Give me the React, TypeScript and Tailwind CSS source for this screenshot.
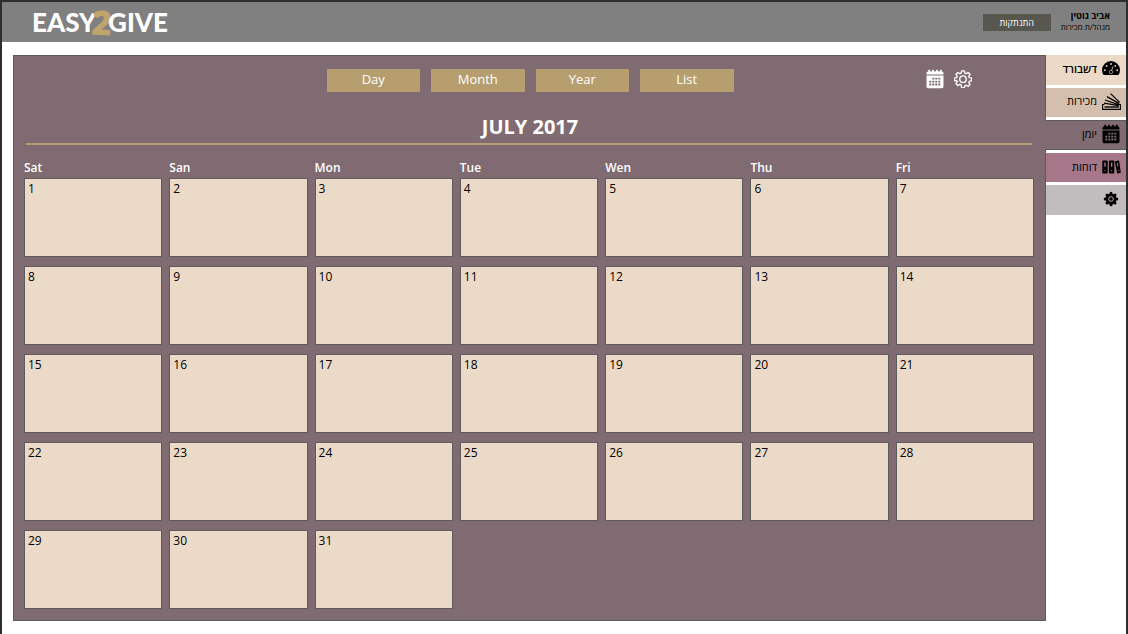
import type { ReactNode } from 'react';

const views = ['Day', 'Month', 'Year', 'List'];
const weekdays = ['Sat', 'San', 'Mon', 'Tue', 'Wen', 'Thu', 'Fri'];
const weeks = [0, 1, 2, 3, 4].map((w) =>
  [1, 2, 3, 4, 5, 6, 7].map((d) => w * 7 + d).filter((d) => d <= 31),
);

function CalendarIcon({ hole }: { hole: string }) {
  return (
    <svg viewBox="0 0 18 20" className="h-5 w-[18px]" aria-hidden="true">
      <path
        fill="currentColor"
        d="M0.5 6.5h17V17.5a1.7 1.7 0 0 1-1.7 1.7H2.2A1.7 1.7 0 0 1 0.5 17.5zM0.5 5.5V4.2Q0.5 2.6 2 2.6L2.4 1.2Q3.2 0 4 1.2L4.6 2.6H5.6L6.2 1.2Q7 0 7.8 1.2L8.4 2.6H9.6L10.2 1.2Q11 0 11.8 1.2L12.4 2.6H13.4L14 1.2Q14.8 0 15.6 1.2L16 2.6Q17.5 2.6 17.5 4.2V5.500z"
      />
      <path
        className={hole}
        strokeWidth="1.8"
        strokeDasharray="2 1"
        fill="none"
        d="M6.300 9.700h8.700M3.300 12.600h11.700M3.300 15.500h11.700"
      />
    </svg>
  );
}

function GearOutline() {
  return (
    <svg viewBox="0 0 20 20" className="h-[18px] w-[18px]" fill="none" stroke="currentColor" strokeWidth="1.5" strokeLinejoin="round" aria-hidden="true">
      <path d="M8.500 1h3l.5 2.400 1.600.7 2.100-1.400 2.100 2.100-1.400 2.100.7 1.600 2.400.5v3l-2.400.5-.7 1.600 1.400 2.100-2.100 2.100-2.100-1.400-1.600.7-.5 2.400h-3L8 16.600l-1.600-.7-2.100 1.400-2.100-2.100 1.400-2.100-.7-1.600L.5 12V9l2.400-.5.7-1.600-1.400-2.100 2.100-2.100L6.400 4.100 8 3.400z" />
      <circle cx="10" cy="10.200" r="3.600" />
    </svg>
  );
}

function DashboardIcon() {
  return (
    <svg viewBox="0 0 18 15" className="h-[15px] w-[18px]" aria-hidden="true">
      <path fill="currentColor" d="M1.600 14A8.700 8.700 0 0 1 0 9a9 9 0 0 1 18 0 8.700 8.700 0 0 1-1.600 5z" />
      <g className="fill-[#ebdac8]">
        <circle cx="2.800" cy="9.200" r=".9" />
        <circle cx="4.700" cy="4.900" r=".9" />
        <circle cx="9" cy="3" r=".9" />
        <circle cx="13.300" cy="4.900" r=".9" />
        <circle cx="15.200" cy="9.200" r=".9" />
      </g>
      <path className="stroke-[#ebdac8]" strokeWidth=".8" d="M9.200 10.500L11 5.500" />
      <circle className="stroke-[#ebdac8]" strokeWidth=".6" cx="9" cy="11" r="1.700" fill="currentColor" />
    </svg>
  );
}

function SalesIcon() {
  return (
    <svg viewBox="0 0 19 17" className="h-[17px] w-[19px]" fill="none" stroke="currentColor" strokeWidth="1.100" aria-hidden="true">
      <path d="M2.500 11.500H.6v4.900h17.800v-4.900H17" />
      <path d="M2.500 14h14.500" strokeWidth="1.400" />
      <path d="M2 10.200L16.800 12.700M3 7L17 11.800M5 3.600L17.200 10.600M8.600.6L17.600 9.400" strokeWidth="1.300" />
    </svg>
  );
}

function ReportsIcon() {
  return (
    <svg viewBox="0 0 19 14" className="h-3.5 w-[19px]" aria-hidden="true">
      <rect x=".3" y=".6" width="5.400" height="12.800" rx=".9" fill="currentColor" />
      <rect x="6.900" y=".6" width="5.400" height="12.800" rx=".9" fill="currentColor" />
      <path fill="currentColor" d="M13.300 1.300l2.900-.8q.7-.1.9.6l1.700 11q0 .7-.6.8l-2.200.5q-.7.1-.9-.7l-2.200-10.600q0-.6.4-.8z" />
      <g className="fill-[#a67789]">
        <path d="M2.300 2.600h1.400v4.200H2.300zM8.900 2.600h1.400v4.200H8.900zM14.800 2.900l1-.2.700 3.800-1 .2z" />
        <circle cx="3" cy="10.600" r=".7" />
        <circle cx="9.600" cy="10.600" r=".7" />
        <circle cx="16.800" cy="10.600" r=".6" />
      </g>
    </svg>
  );
}

function SettingsIcon() {
  return (
    <svg viewBox="0 0 16 16" className="h-4 w-4" aria-hidden="true">
      <circle cx="8" cy="8" r="5.500" fill="currentColor" />
      <g stroke="currentColor" strokeWidth="3" strokeLinecap="round">
        <path d="M8 2.200v11.600M2.200 8h11.600M4 4l8 8M12 4l-8 8" />
      </g>
      <circle cx="8" cy="8" r="2.300" fill="none" className="stroke-[#c1bdbe]" strokeWidth=".9" />
    </svg>
  );
}

type NavItem = { label: string; tone: string; icon: ReactNode; name?: string };

const navItems: NavItem[] = [
  { label: 'דשבורד', tone: 'bg-[#ebdac8] font-semibold', icon: <DashboardIcon /> },
  { label: 'מכירות', tone: 'bg-[#d4bfaf]', icon: <SalesIcon /> },
  { label: 'יומן', tone: 'bg-[#7f6b71] border-y border-[#5b5b5b] -ml-px', icon: <CalendarIcon hole="stroke-[#7f6b71]" /> },
  { label: 'דוחות', tone: 'bg-[#a67789]', icon: <ReportsIcon /> },
  { label: '', tone: 'bg-[#c1bdbe]', icon: <SettingsIcon />, name: 'הגדרות' },
];

export default function App() {
  return (
    <div className="min-h-screen border-x-2 border-t-2 border-[#2e2e2e] bg-white font-['Open_Sans','Noto_Sans',sans-serif] text-black">
      <header className="flex h-10 items-center justify-between bg-[#808080] pr-4 pl-[30px]">
        <a href="#" aria-label="EASY2GIVE" className="flex items-center font-['Lato',sans-serif] text-[26px] leading-10 font-black text-white">
          <span>EASY</span>
          <span className="-mx-1 rotate-3 font-['Open_Sans',sans-serif] text-[34px] font-extrabold text-[#bfa46c]">2</span>
          <span className="z-10">GIVE</span>
        </a>
        <div className="flex items-center gap-2.5">
          <button type="button" className="h-[17px] w-[68px] bg-[#575750] text-[9px] leading-[15px] font-medium text-white">
            התנתקות
          </button>
          <div dir="rtl" className="pb-0.5 text-[8px] leading-[11px]">
            <p className="text-[9px] font-bold">אביב גוטין</p>
            <p>מנהל/ת מכירות</p>
          </div>
        </div>
      </header>

      <div className="flex items-start pt-[13px] pl-[11px]">
        <main className="flex-1 border border-[#5b5b5b] bg-[#7f6b71] pt-[13px] pr-[11px] pb-[11px] pl-3 text-white">
          <div className="grid grid-cols-[1fr_407px_1fr] items-center">
            <div className="col-start-2 grid grid-cols-4 gap-[11px]">
              {views.map((v) => (
                <button key={v} type="button" className="h-[23px] bg-[#b69e6f] text-[13px] leading-5 font-medium">
                  <span className="block pb-1">{v}</span>
                </button>
              ))}
            </div>
            <div className="flex h-5 items-center justify-end gap-2.5 self-start pr-[62px]">
              <button type="button" aria-label="Calendar">
                <CalendarIcon hole="stroke-[#7f6b71]" />
              </button>
              <button type="button" aria-label="Settings">
                <GearOutline />
              </button>
            </div>
          </div>

          <h1 className="mt-[21px] mr-0.5 border-b-2 border-[#b69e6f] pb-0.5 pl-0.5 text-center text-[20px] leading-7 font-bold">JULY 2017</h1>

          <table className="mt-[15px] -ml-0.5 block text-[12px]">
            <thead className="grid grid-cols-7 gap-x-[7px]">
              <tr className="contents">
                {weekdays.map((d) => (
                  <th key={d} className="p-0 text-left leading-4 font-semibold">{d}</th>
                ))}
              </tr>
            </thead>
            <tbody className="mt-0.5 grid grid-cols-7 gap-x-[7px] gap-y-[9px] text-black">
              {weeks.map((week) => (
                <tr key={week[0]} className="contents">
                  {week.map((d) => (
                    <td key={d} className="h-[79px] border border-[#5b5b5b] bg-[#ebdac8] px-[3px] pt-0.5 leading-4">{d}</td>
                  ))}
                </tr>
              ))}
            </tbody>
          </table>
        </main>

        <nav dir="rtl" className="grid h-40 w-20 grid-rows-5 gap-[3px]">
          {navItems.map((item) => (
            <a key={item.name ?? item.label} href="#" aria-label={item.name} className={`flex items-center gap-1 pr-[5px] pb-0.5 text-[11px] leading-4 ${item.tone}`}>
              <span className="flex w-5 justify-center">{item.icon}</span>
              <span>{item.label}</span>
            </a>
          ))}
        </nav>
      </div>
    </div>
  );
}
